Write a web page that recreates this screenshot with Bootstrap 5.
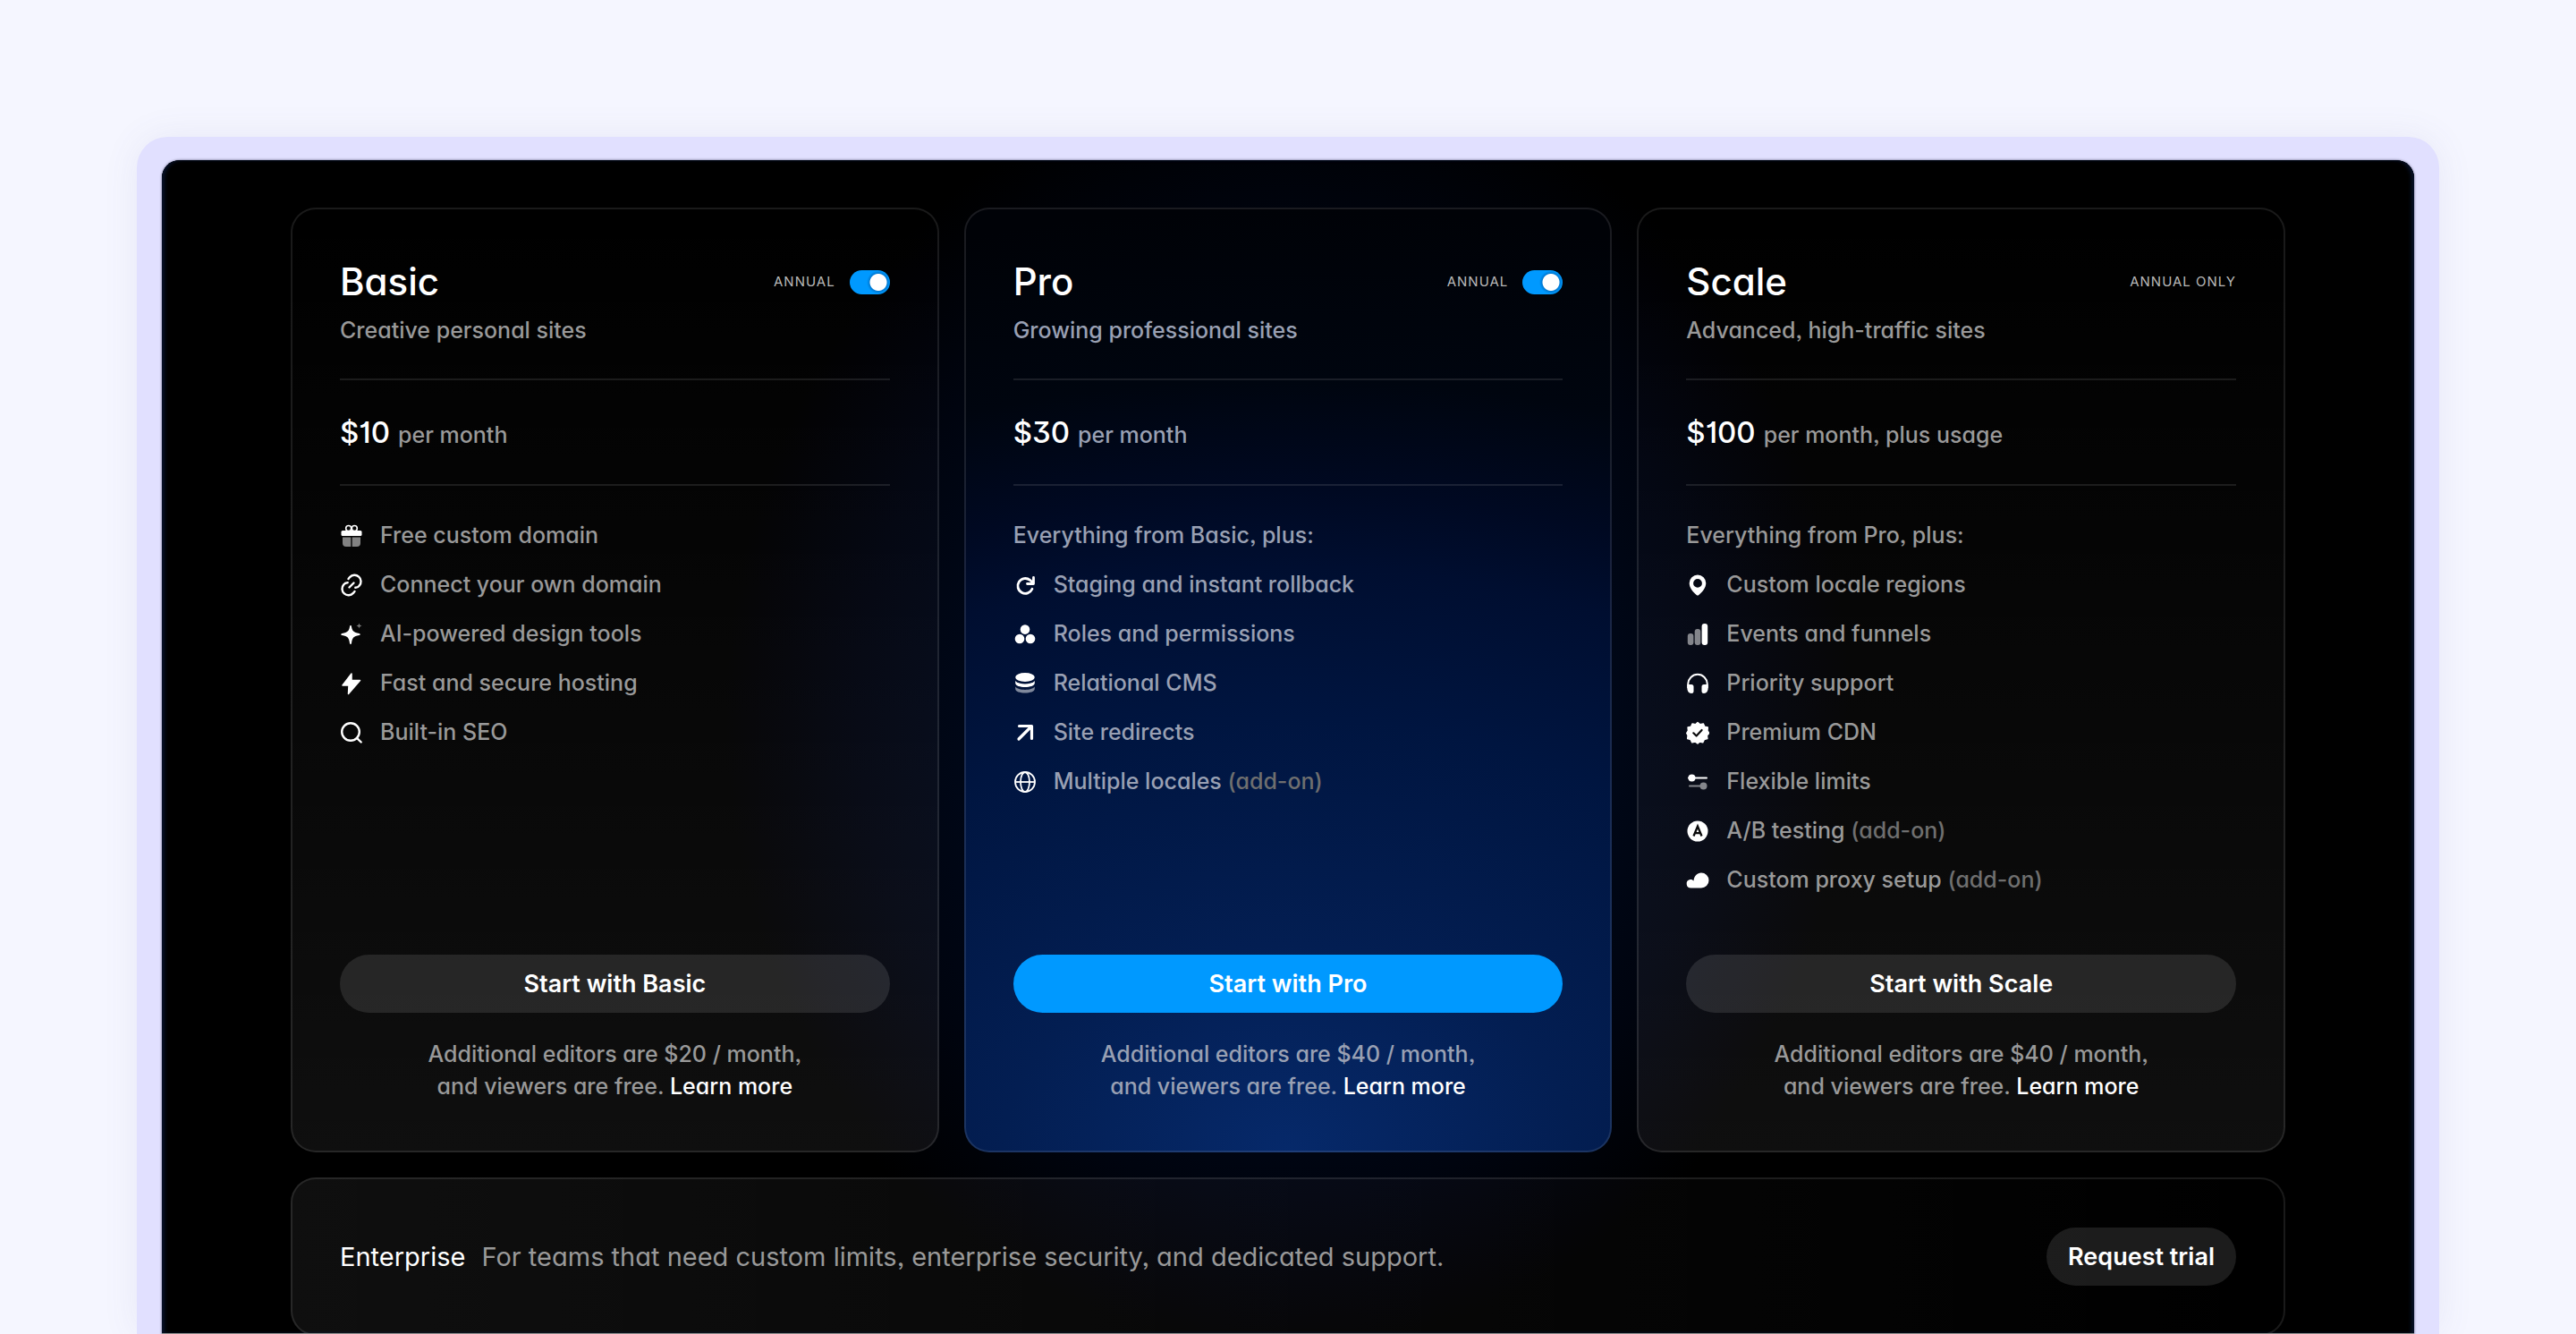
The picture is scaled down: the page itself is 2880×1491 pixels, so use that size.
<!DOCTYPE html>
<html lang="en">
<head>
<meta charset="utf-8">
<meta name="viewport" content="width=device-width, initial-scale=1">
<title>Pricing</title>
<link rel="stylesheet" href="https://cdn.jsdelivr.net/npm/bootstrap@5.3.0/dist/css/bootstrap.min.css">
<script src="https://cdn.jsdelivr.net/npm/bootstrap@5.3.0/dist/js/bootstrap.bundle.min.js"></script>
<style>
  body {
    background: #f5f6ff;
    color: #999;
    font-family: Inter, "Liberation Sans", sans-serif;
    font-feature-settings: "cv01", "cv03", "cv04", "cv09", "cv11", "ss03";
    font-size: 25px;
    font-weight: 500;
    line-height: 36px;
  }
  .stage { height: 100vh; padding: 153px 153px 0; overflow: hidden; }
  .bezel {
    height: 100%;
    padding: 26px 28px 0;
    background: #e1e0ff;
    border-radius: 34px 34px 0 0;
    box-shadow: 0 0 40px rgba(90, 90, 160, .09);
  }
  .screen {
    height: 100%;
    overflow: hidden;
    padding: 53px 144px 0;
    border-bottom: 1px solid #8f8f8f;
    border-radius: 20px 20px 0 0;
    background: radial-gradient(ellipse 640px 720px at 50% 620px, #000b22 0%, #00091c 45%, #00040f 75%, #000 100%) #000;
    box-shadow: 0 0 3px rgba(0, 0, 30, .6), inset 4px 0 4px -1px #07122b, inset -4px 0 4px -1px #07122b;
  }
  .plans { gap: 28px; }
  .plan {
    flex: 1 1 0;
    padding: 53px 53px 54px;
    border: 2px solid rgba(255, 255, 255, .1);
    border-radius: 28px;
    background: linear-gradient(rgba(255, 255, 255, 0), rgba(255, 255, 255, .06)) border-box;
  }
  .plan-pro {
    background: radial-gradient(ellipse 200% 100% at 50% 100%, #06296a 0%, #031e52 22%, #001540 46%, #000e30 62%, #000922 70%, #00050f 82%, #000207 100%) border-box;
  }
  .plan-name { font-size: 42px; line-height: 56px; font-weight: 500; color: #fff; }
  .tagline { margin: 8px 0 36px; }
  .billing { font-size: 15px; line-height: 28px; font-weight: 400; letter-spacing: 1px; color: #b8b8b8; gap: 16px; }
  .form-check-input.billing-switch {
    width: 45px; height: 27px; margin: 0; float: none;
    border: 0; border-radius: 14px;
    background: radial-gradient(circle at 32px 50%, #fff 9px, rgba(0, 50, 110, .3) 10px, transparent 13px) #09f;
  }
  .rule { height: 2px; margin: 0; border: 0; opacity: 1; background: rgba(255, 255, 255, .1); }
  .plan-price { height: 116px; padding-top: 38px; gap: 9px; line-height: 40px; }
  .price-sum { font-size: 33px; color: #fff; }
  .features { margin: 28px 0 56px; min-height: 440px; }
  .features li { height: 55px; gap: 19px; line-height: 55px; }
  .features svg { width: 26px; height: 26px; flex: none; color: #fff; }
  .addon { color: #6f6f6f; }
  .pill { border: 0; border-radius: 33px; height: 65px; padding: 0 24px; font-size: 27px; font-weight: 600; line-height: 65px; color: #fff; background: rgba(255, 255, 255, .11); }
  .pill-blue { background: #09f; }
  .more { color: #fff; text-decoration: none; }
  .foot { margin: 28px 0 0; }
  .plan-pro, .plan-pro .foot { color: #99a0b3; }
  .enterprise {
    margin-top: 28px; padding: 54px 53px; gap: 18px;
    border: 2px solid rgba(255, 255, 255, .1); border-radius: 28px;
    background: linear-gradient(90deg, rgba(255, 255, 255, .06), rgba(255, 255, 255, 0)) border-box;
    font-size: 29px; line-height: 40px; font-weight: 400;
  }
</style>
</head>
<body>
<main class="stage">
  <div class="bezel">
    <div class="screen">
      <div class="plans d-flex">

        <section class="plan d-flex flex-column">
          <div class="d-flex justify-content-between align-items-center">
            <h2 class="plan-name mb-0">Basic</h2>
            <div class="billing d-flex align-items-center">
              <label for="annual-basic">ANNUAL</label>
              <input class="form-check-input billing-switch" type="checkbox" role="switch" id="annual-basic" checked>
            </div>
          </div>
          <p class="tagline">Creative personal sites</p>
          <hr class="rule">
          <div class="plan-price d-flex align-items-baseline"><span class="price-sum">$10</span><span>per month</span></div>
          <hr class="rule">
          <ul class="features list-unstyled">
            <li class="d-flex align-items-center"><svg viewBox="0 0 26 26" fill="currentColor"><circle cx="9.700" cy="4.500" r="3" fill="none" stroke="currentColor" stroke-width="1.600"/><circle cx="16.300" cy="4.500" r="3" fill="none" stroke="currentColor" stroke-width="1.600"/><rect x="1.500" y="7" width="23" height="6" rx="1.500"/><path opacity=".5" d="M3 14.500h9.300V25H7a4 4 0 0 1-4-4zM13.700 14.500H23V21a4 4 0 0 1-4 4h-5.300z"/></svg>Free custom domain</li>
            <li class="d-flex align-items-center"><svg viewBox="0 0 26 26" fill="none" stroke="currentColor" stroke-width="2.400" stroke-linecap="round"><path d="M9.500 6l1.600-1.900a6.900 6.900 0 0 1 10.600 9.500c-1.100 1.600-2.700 2.300-4.400 2.200M16.500 20l-1.600 1.900A6.900 6.900 0 0 1 4.300 12.400c1.100-1.600 2.700-2.300 4.400-2.200M10.500 15.500l5-5"/></svg>Connect your own domain</li>
            <li class="d-flex align-items-center"><svg viewBox="0 0 26 26" fill="currentColor"><path d="M12 3c.6 0 .8.500 1 1.400 1 5 2.100 6.100 8.600 7.500 1.600.4 1.600 1.800 0 2.200-6.500 1.400-7.600 2.500-8.600 9-.2 1.400-1.800 1.400-2 0-1-6.500-2.100-7.600-8.600-9-1.600-.4-1.600-1.800 0-2.200C8.900 10.500 10 9.400 11 4.400c.2-.9.400-1.400 1-1.400z"/><path opacity=".45" d="M21.500.5c.5 2 1 2.500 3 3-2 .5-2.500 1-3 3-.5-2-1-2.500-3-3 2-.5 2.500-1 3-3z"/></svg>AI-powered design tools</li>
            <li class="d-flex align-items-center"><svg viewBox="0 0 26 26" fill="currentColor" stroke="currentColor" stroke-width="1.500" stroke-linejoin="round"><path d="M13 2L3 15h7l-.500 9.500L22.500 9.500H13z"/></svg>Fast and secure hosting</li>
            <li class="d-flex align-items-center"><svg viewBox="0 0 26 26" fill="none" stroke="currentColor" stroke-width="2.400" stroke-linecap="round"><circle cx="12" cy="12" r="9.800"/><path d="M19.200 19.200l4.500 4.300"/></svg>Built-in SEO</li>
          </ul>
          <button type="button" class="pill w-100">Start with Basic</button>
          <p class="foot text-center">Additional editors are $20 / month,<br>and viewers are free. <a href="#" class="more">Learn more</a></p>
        </section>

        <section class="plan plan-pro d-flex flex-column">
          <div class="d-flex justify-content-between align-items-center">
            <h2 class="plan-name mb-0">Pro</h2>
            <div class="billing d-flex align-items-center">
              <label for="annual-pro">ANNUAL</label>
              <input class="form-check-input billing-switch" type="checkbox" role="switch" id="annual-pro" checked>
            </div>
          </div>
          <p class="tagline">Growing professional sites</p>
          <hr class="rule">
          <div class="plan-price d-flex align-items-baseline"><span class="price-sum">$30</span><span>per month</span></div>
          <hr class="rule">
          <ul class="features list-unstyled">
            <li>Everything from Basic, plus:</li>
            <li class="d-flex align-items-center"><svg viewBox="0 0 26 26" fill="none" stroke="currentColor" stroke-width="2.800" stroke-linecap="round" stroke-linejoin="round"><path d="M21 17.300A8.400 8.400 0 1 1 18.500 7.300L21.500 10M22.500 4.500v7h-7"/></svg>Staging and instant rollback</li>
            <li class="d-flex align-items-center"><svg viewBox="0 0 26 26" fill="currentColor"><circle cx="13" cy="7.600" r="5.300"/><circle cx="7" cy="18" r="5.300"/><circle cx="19" cy="18" r="5.300"/></svg>Roles and permissions</li>
            <li class="d-flex align-items-center"><svg viewBox="0 0 26 26" fill="currentColor"><ellipse cx="13" cy="6" rx="10.800" ry="5"/><path d="M2.200 10c3 4.500 18.600 4.500 21.600 0v2.500c0 6-21.600 6-21.600 0z"/><path opacity=".5" d="M2.200 16.500c3 4.500 18.600 4.500 21.600 0V19c0 6-21.600 6-21.600 0z"/></svg>Relational CMS</li>
            <li class="d-flex align-items-center"><svg viewBox="0 0 26 26" fill="none" stroke="currentColor" stroke-width="3.200" stroke-linecap="round" stroke-linejoin="round"><path d="M6 20L20 6M6.500 5.500h14v14"/></svg>Site redirects</li>
            <li class="d-flex align-items-center"><svg viewBox="0 0 26 26" fill="none" stroke="currentColor" stroke-width="1.800"><circle cx="13" cy="13" r="11"/><ellipse cx="13" cy="13" rx="5" ry="11"/><path d="M2 13h22"/></svg><span>Multiple locales <span class="addon">(add-on)</span></span></li>
          </ul>
          <button type="button" class="pill pill-blue w-100">Start with Pro</button>
          <p class="foot text-center">Additional editors are $40 / month,<br>and viewers are free. <a href="#" class="more">Learn more</a></p>
        </section>

        <section class="plan d-flex flex-column">
          <div class="d-flex justify-content-between align-items-center">
            <h2 class="plan-name mb-0">Scale</h2>
            <div class="billing">ANNUAL ONLY</div>
          </div>
          <p class="tagline">Advanced, high-traffic sites</p>
          <hr class="rule">
          <div class="plan-price d-flex align-items-baseline"><span class="price-sum">$100</span><span>per month, plus usage</span></div>
          <hr class="rule">
          <ul class="features list-unstyled">
            <li>Everything from Pro, plus:</li>
            <li class="d-flex align-items-center"><svg viewBox="0 0 26 26" fill="currentColor"><path fill-rule="evenodd" d="M13 1.500a9.300 9.300 0 0 0-9.300 9.300c0 5 3.800 10 8.300 13.500q1 .6 2 0c4.500-3.500 8.300-8.500 8.300-13.500A9.300 9.300 0 0 0 13 1.500zm0 4.500a4.900 4.900 0 1 1 0 9.800A4.900 4.900 0 0 1 13 6z"/></svg>Custom locale regions</li>
            <li class="d-flex align-items-center"><svg viewBox="0 0 26 26" fill="currentColor"><rect x="1.800" y="12" width="6.600" height="13" rx="3" opacity=".5"/><rect x="9.700" y="7" width="6.600" height="18" rx="3" opacity=".5"/><rect x="17.600" y="1" width="6.600" height="24" rx="3"/></svg>Events and funnels</li>
            <li class="d-flex align-items-center"><svg viewBox="0 0 26 26" fill="currentColor"><path d="M2.300 18v-4.500a10.700 10.700 0 0 1 21.400 0V18" fill="none" stroke="currentColor" stroke-width="2"/><path d="M1.300 14H6q2.500 0 2.500 2.500v5Q8.500 24 6 24 1.300 23.500 1.300 18zM24.700 14H20q-2.500 0-2.500 2.500v5Q17.500 24 20 24q4.700-.5 4.700-6z"/></svg>Priority support</li>
            <li class="d-flex align-items-center"><svg viewBox="0 0 26 26"><path fill="currentColor" stroke="currentColor" stroke-width="1.500" stroke-linejoin="round" d="M13 1.500l2.800 2.300 3.500-.9 1.500 3.300 3.500.9-.4 3.600 1.800 2.800-2.300 2.500.4 3.600-3.500 1-1.600 3.200-3.400-.9L13 25l-2.800-2.100-3.400.9-1.600-3.200-3.500-1 .4-3.600L.8 13.500l1.700-2.800-.4-3.600 3.500-.9 1.500-3.300 3.500.9z"/><path d="M8.300 13.300l3.300 3.200 6-6.500" fill="none" stroke="#0a0a0b" stroke-width="2.200" stroke-linecap="round" stroke-linejoin="round"/></svg>Premium CDN</li>
            <li class="d-flex align-items-center"><svg viewBox="0 0 26 26" fill="currentColor"><circle cx="6.500" cy="8.500" r="4"/><rect x="2" y="7.500" width="22" height="2" rx="1"/><g opacity=".5"><circle cx="19.500" cy="17.500" r="4"/><rect x="3" y="16.500" width="18" height="2" rx="1"/></g></svg>Flexible limits</li>
            <li class="d-flex align-items-center"><svg viewBox="0 0 26 26"><circle cx="13" cy="13" r="11.500" fill="currentColor"/><path d="M8.500 18.500L13 7.500l4.500 11M10 15.200h6" fill="none" stroke="#0a0a0b" stroke-width="2.300"/></svg><span>A/B testing <span class="addon">(add-on)</span></span></li>
            <li class="d-flex align-items-center"><svg viewBox="0 0 26 26" fill="currentColor"><path d="M5.500 21.500a4.800 4.800 0 0 1-1-9.500c1.500-.4 3 .2 4 1.500C9 8 12.500 4.500 17 4.500a8.500 8.500 0 0 1 0 17z"/></svg><span>Custom proxy setup <span class="addon">(add-on)</span></span></li>
          </ul>
          <button type="button" class="pill w-100">Start with Scale</button>
          <p class="foot text-center">Additional editors are $40 / month,<br>and viewers are free. <a href="#" class="more">Learn more</a></p>
        </section>
      </div>

      <section class="enterprise d-flex align-items-center">
        <span class="text-white">Enterprise</span>
        <span>For teams that need custom limits, enterprise security, and dedicated support.</span>
        <button type="button" class="pill ms-auto">Request trial</button>
      </section>
    </div>
  </div>
</main>
</body>
</html>
